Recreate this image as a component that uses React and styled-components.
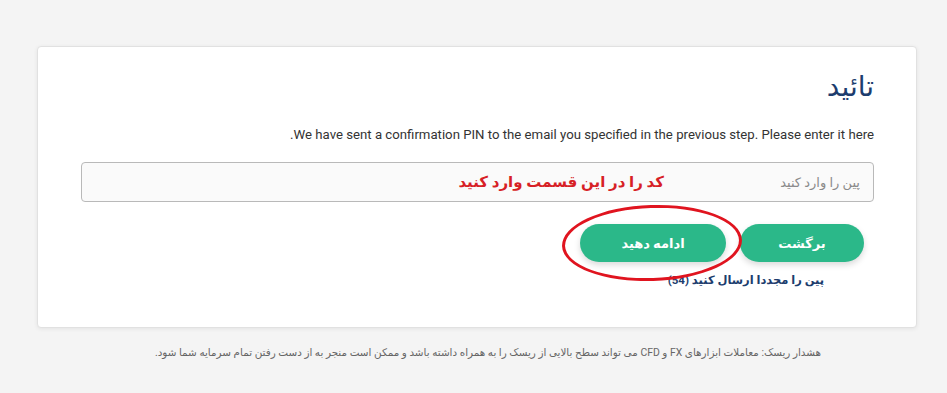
import React from 'react'
import styled, { createGlobalStyle } from 'styled-components'

const GlobalStyle = createGlobalStyle`
  body {
    margin: 0;
    background: #f4f4f4;
    font-family: 'Roboto', 'DejaVu Sans', sans-serif;
  }
`

const Page = styled.div`
  padding: 46px 0 0 37px;
  width: 880px;
`

const Card = styled.div`
  box-sizing: border-box;
  height: 282px;
  background: #fff;
  border: 1px solid #e1e1e1;
  border-radius: 4px;
  box-shadow: 0 1px 4px rgba(0, 0, 0, 0.07);
  padding: 25px 42px 0 43px;
  direction: rtl;
`

const Title = styled.h1`
  margin: 0;
  font-size: 28px;
  line-height: 30px;
  font-weight: 400;
  color: #1d3d6e;
`

const Message = styled.p`
  margin: 24px 0 0;
  font-size: 13.2px;
  line-height: 18px;
  color: #333;
`

const InputWrap = styled.div`
  position: relative;
  margin-top: 18px;
`

const PinInput = styled.input`
  box-sizing: border-box;
  width: 100%;
  height: 40px;
  border: 1px solid #b9b9b9;
  border-radius: 4px;
  background: #fafafa;
  padding: 0 13px;
  font-size: 13px;
  font-family: inherit;
  direction: rtl;
  outline: none;
  &::placeholder {
    color: #8a8a8a;
  }
`

const Annotation = styled.span`
  position: absolute;
  right: 210px;
  top: 0;
  height: 40px;
  display: flex;
  align-items: center;
  font-size: 15px;
  font-weight: 700;
  color: #d71f26;
  pointer-events: none;
`

const Actions = styled.div`
  display: flex;
  gap: 14px;
  margin-top: 22px;
  padding-right: 10px;
`

const ButtonSlot = styled.div`
  position: relative;
`

const Button = styled.button`
  width: ${p => p.$w}px;
  height: 38px;
  border: none;
  border-radius: 19px;
  background: #2bb889;
  color: #fff;
  font-family: inherit;
  font-size: 13px;
  font-weight: 700;
  box-shadow: 0 3px 6px rgba(0, 0, 0, 0.15);
  cursor: pointer;
`

const Ring = styled.span`
  position: absolute;
  left: -18px;
  right: -16px;
  top: -19px;
  bottom: -19px;
  border: 3px solid #e0141f;
  border-radius: 50%;
  transform: rotate(-2deg);
  pointer-events: none;
`

const Resend = styled.a`
  display: block;
  margin-top: 9px;
  padding-right: 50px;
  font-size: 11.5px;
  line-height: 18px;
  font-weight: 700;
  color: #1d3d6e;
  text-decoration: none;
`

const Footer = styled.p`
  margin: 17px 0 0;
  padding-left: 22px;
  direction: rtl;
  text-align: center;
  font-size: 10.4px;
  line-height: 16px;
  color: #666;
`

export default function App () {
  return (
    <>
      <GlobalStyle />
      <Page>
        <Card>
          <Title>تائید</Title>
          <Message>We have sent a confirmation PIN to the email you specified in the previous step. Please enter it here.</Message>
          <InputWrap>
            <PinInput placeholder="پین را وارد کنید" />
            <Annotation>کد را در این قسمت وارد کنید</Annotation>
          </InputWrap>
          <Actions>
            <ButtonSlot>
              <Button $w={124}>برگشت</Button>
            </ButtonSlot>
            <ButtonSlot>
              <Button $w={146}>ادامه دهید</Button>
              <Ring />
            </ButtonSlot>
          </Actions>
          <Resend href="#">پین را مجددا ارسال کنید (54)</Resend>
        </Card>
        <Footer>هشدار ریسک: معاملات ابزارهای FX و CFD می تواند سطح بالایی از ریسک را به همراه داشته باشد و ممکن است منجر به از دست رفتن تمام سرمایه شما شود.</Footer>
      </Page>
    </>
  )
}
